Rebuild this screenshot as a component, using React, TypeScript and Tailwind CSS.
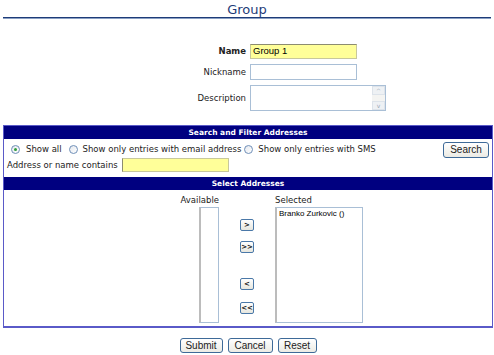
import React from 'react'

const label = "text-[8.5px] text-[#222] font-['DejaVu_Sans',sans-serif]"

const Radio = ({ checked }: { checked?: boolean }) => (
  <span className="w-[9px] h-[9px] rounded-full border border-[#6f8fb8] bg-gradient-to-br from-[#e4e8ee] to-white flex items-center justify-center shrink-0">
    {checked && <span className="w-[3px] h-[3px] rounded-full bg-[#2f9e3a]" />}
  </span>
)

const MoveBtn = ({ children, className }: { children: React.ReactNode; className?: string }) => (
  <button
    className={
      "w-[14px] h-[12px] rounded-[2px] border border-[#4a78a8] bg-gradient-to-b from-white to-[#e6e6de] flex items-center justify-center text-[7px] font-bold leading-none text-[#111] font-['DejaVu_Sans',sans-serif] " +
      (className ?? '')
    }
  >
    {children}
  </button>
)

const XpButton = ({ children, className }: { children: React.ReactNode; className?: string }) => (
  <button
    className={
      "h-[15px] rounded-[3px] border border-[#3e6a98] bg-gradient-to-b from-white to-[#ecebe4] flex items-center justify-center text-[10px] leading-none text-[#222] font-['Liberation_Sans',sans-serif] " +
      (className ?? '')
    }
  >
    {children}
  </button>
)

const App = () => {
  return (
    <div className="w-[494px] h-[355px] bg-white overflow-hidden font-['DejaVu_Sans',sans-serif]">
      {/* title */}
      <div className="pt-[2px] h-[17px] text-center text-[13px] leading-[15px] text-[#1e3c78]">Group</div>
      <div className="mx-[3px] h-[1px] bg-[#1e3c78]" />
      <div className="mx-[3px] h-[1px] bg-[#8aa0c4]" />

      {/* form */}
      <div className="mt-[25px] flex flex-col gap-[5px]">
        <div className="flex items-center gap-[4px]">
          <span className={label + ' w-[246px] text-right font-bold'}>Name</span>
          <div className="w-[107px] h-[15px] bg-[#ffff99] border border-[#c8c89c] border-t-[#8c8c70] px-[2px] flex items-center text-[9.5px] text-black font-['Liberation_Sans',sans-serif]">
            Group 1
          </div>
        </div>
        <div className="flex items-center gap-[4px]">
          <span className={label + ' w-[246px] text-right'}>Nickname</span>
          <div className="w-[107px] h-[16px] bg-white border border-[#a9bfd6]" />
        </div>
        <div className="flex items-center gap-[4px]">
          <span className={label + ' w-[246px] text-right'}>Description</span>
          <div className="w-[136px] h-[26px] bg-white border border-[#a9bfd6] flex justify-end">
            <div className="w-[13px] h-full flex flex-col justify-between bg-[#f4f4f2]">
              <div className="h-[9px] border border-[#dde3ea] bg-[#eef1f4] flex items-center justify-center text-[6px] text-[#9aa6b4] leading-none">^</div>
              <div className="h-[9px] border border-[#dde3ea] bg-[#eef1f4] flex items-center justify-center text-[6px] text-[#9aa6b4] leading-none">v</div>
            </div>
          </div>
        </div>
      </div>

      {/* panel */}
      <div className="mt-[14px] ml-[3px] w-[490px] border border-b-2 border-[#5a5ac8]">
        <div className="h-[13px] bg-[#000080] text-white text-center font-bold text-[7.5px] leading-[13px]">
          Search and Filter Addresses
        </div>
        <div className="pt-[2px] pb-[5px]">
          <div className="h-[17px] flex items-center justify-between pl-[7px] pr-[3px]">
            <div className={label + ' flex items-center'}>
              <Radio checked />
              <span className="ml-[6px]">Show all</span>
              <span className="ml-[7px]"><Radio /></span>
              <span className="ml-[5px]">Show only entries with email address</span>
              <span className="ml-[3px]"><Radio /></span>
              <span className="ml-[5px]">Show only entries with SMS</span>
            </div>
            <XpButton className="w-[46px] h-[16px] text-[10.5px]">Search</XpButton>
          </div>
          <div className="h-[14px] flex items-center pl-[3px]">
            <span className={label}>Address or name contains</span>
            <div className="ml-[4px] w-[107px] h-[14px] bg-[#ffff99] border border-[#c8c89c] border-l-[#8c8c70]" />
          </div>
        </div>
        <div className="h-[13px] bg-[#000080] text-white text-center font-bold text-[7.5px] leading-[13px]">
          Select Addresses
        </div>
        <div className="pt-[4px] pb-[3px] pl-[175px] flex items-start">
          <div className="w-[40px] flex flex-col items-end">
            <span className={label + ' h-[12px] leading-[12px]'}>Available</span>
            <div className="mt-[1px] w-[20px] h-[116px] border border-[#a9bfd6] border-l-[#bcbcbc] border-l-2 bg-white" />
          </div>
          <div className="ml-[21px] mt-[25px] flex flex-col">
            <MoveBtn>&gt;</MoveBtn>
            <MoveBtn className="mt-[10px]">&gt;&gt;</MoveBtn>
            <MoveBtn className="mt-[25px]">&lt;</MoveBtn>
            <MoveBtn className="mt-[12px]">&lt;&lt;</MoveBtn>
          </div>
          <div className="ml-[21px] flex flex-col">
            <span className={label + ' h-[12px] leading-[12px]'}>Selected</span>
            <div className="mt-[1px] w-[88px] h-[116px] border border-[#a9bfd6] border-l-[#bcbcbc] border-l-2 bg-white px-[2px] pt-[1px] text-[8px] leading-[10px] text-black font-['Liberation_Sans',sans-serif]">
              Branko Zurkovic ()
            </div>
          </div>
        </div>
      </div>

      {/* bottom buttons */}
      <div className="mt-[10px] flex justify-center gap-[5px] pl-[2px]">
        <XpButton className="w-[43px]">Submit</XpButton>
        <XpButton className="w-[45px]">Cancel</XpButton>
        <XpButton className="w-[39px]">Reset</XpButton>
      </div>
    </div>
  )
}

export default App
